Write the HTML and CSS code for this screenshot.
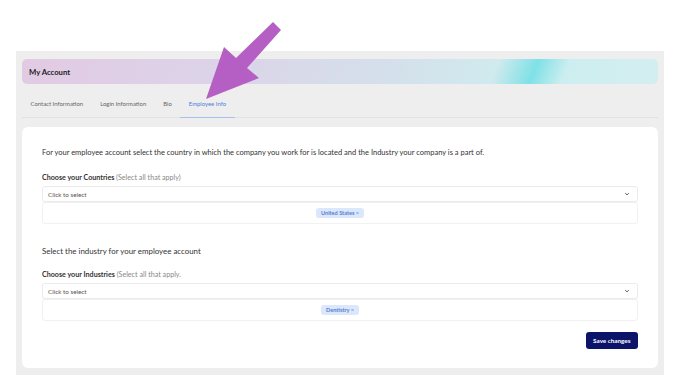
FILE: index.html
```html
<!DOCTYPE html>
<html>
<head>
    <title>My Account</title>
    <link rel="stylesheet" href="styles.css">
</head>
<body>
    <div class="account-panel">
        <div class="account-banner">
            <h1 class="account-title">My Account</h1>
        </div>

        <nav class="account-tabs">
            <a class="tab">Contact Information</a>
            <a class="tab">Login Information</a>
            <a class="tab">Bio</a>
            <a class="tab active">Employee Info</a>
        </nav>

        <div class="account-card">
            <p class="intro">For your employee account select the country in which the company you work for is located and the Industry your company is a part of.</p>

            <label class="field-label">Choose your Countries <span class="hint">(Select all that apply)</span></label>
            <div class="select-box">
                <span>Click to select</span>
                <svg class="chevron" viewBox="0 0 10 10" width="6" height="6"><path d="M2 3.5 L5 6.5 L8 3.5" fill="none" stroke="#444" stroke-width="1.5"/></svg>
            </div>
            <div class="chip-box">
                <span class="chip">United States <span class="chip-x">&times;</span></span>
            </div>

            <h2 class="section-title">Select the industry for your employee account</h2>

            <label class="field-label">Choose your Industries <span class="hint">(Select all that apply.</span></label>
            <div class="select-box">
                <span>Click to select</span>
                <svg class="chevron" viewBox="0 0 10 10" width="6" height="6"><path d="M2 3.5 L5 6.5 L8 3.5" fill="none" stroke="#444" stroke-width="1.5"/></svg>
            </div>
            <div class="chip-box">
                <span class="chip">Dentistry <span class="chip-x">&times;</span></span>
            </div>

            <div class="actions">
                <button class="save-button">Save changes</button>
            </div>
        </div>
    </div>

    <!-- callout arrow pointing at the active tab -->
    <svg class="callout-arrow" width="688" height="392" viewBox="0 0 688 392">
        <polygon points="206,99 224,47 236,58 273,22 281,30 247,68 259,78" fill="#b55fc5"/>
    </svg>
</body>
</html>
```

FILE: styles.css
```css
body {
    margin: 0;
    padding: 51px 0 0 16px;
    background-color: #fff;
    font-family: "Lato", "Liberation Sans", sans-serif;
    color: #333;
}
.account-panel {
    width: 636px;
    padding: 8px 6px 7px 6px;
    background-color: #eeeeee;
}
.account-banner {
    height: 25px;
    display: flex;
    align-items: center;
    padding-left: 7px;
    border-radius: 5px;
    background: linear-gradient(112deg, #e2cae3 0%, #dcd3e8 30%, #d4e0eb 58%, #d0eaee 74%, #7fe1e6 80%, #cdeef0 85%, #d4eef0 100%);
}
.account-title {
    margin: 0;
    font-size: 7.7px;
    font-weight: 700;
    color: #222;
}
.account-tabs {
    display: flex;
    border-bottom: 1px solid #e2e2e2;
}
.tab {
    padding: 16px 8.5px 9px 8.5px;
    font-size: 5.95px;
    line-height: 8px;
    color: #666;
    border-bottom: 1px solid transparent;
    margin-bottom: -1px;
}
.tab.active {
    color: #4f7ee0;
    border-bottom-color: #a9bff0;
}
.account-card {
    margin-top: 9px;
    padding: 20px 20px 19px 20px;
    background-color: #fff;
    border-radius: 6px;
}
.intro {
    margin: 0 0 14px 0;
    font-size: 7.5px;
    line-height: 12px;
    color: #333;
}
.section-title {
    margin: 21px 0 13px 0;
    font-size: 7.9px;
    line-height: 12px;
    font-weight: 400;
    color: #333;
}
.field-label {
    display: block;
    margin-bottom: 3px;
    font-size: 7.15px;
    line-height: 10px;
    font-weight: 700;
    color: #333;
}
.hint {
    font-weight: 400;
    color: #888;
}
.select-box {
    height: 14px;
    display: flex;
    align-items: center;
    justify-content: space-between;
    padding: 0 7px 0 5px;
    border: 1px solid #ebebeb;
    border-radius: 3px;
    font-size: 6.3px;
    color: #555;
    box-shadow: 0 1px 1px rgba(0, 0, 0, 0.03);
}
.chevron {
    display: block;
}
.chip-box {
    height: 20px;
    display: flex;
    align-items: center;
    justify-content: center;
    border: 1px solid #f1f1f1;
    border-radius: 3px;
}
.chip {
    padding: 1px 5px;
    font-size: 5.6px;
    line-height: 7.5px;
    font-weight: 700;
    color: #5a7ed2;
    background-color: #dbe7fb;
    border-radius: 3px;
}
.chip-x {
    font-weight: 400;
    color: #4d8bf0;
}
.actions {
    display: flex;
    justify-content: flex-end;
    margin-top: 11px;
}
.save-button {
    height: 17px;
    padding: 0 7.5px;
    border: none;
    border-radius: 3px;
    background-color: #0b1468;
    color: #fff;
    font-family: "Lato", "Liberation Sans", sans-serif;
    font-size: 6.3px;
    font-weight: 700;
}
.callout-arrow {
    position: absolute;
    left: 0;
    top: 0;
    pointer-events: none;
}
```
